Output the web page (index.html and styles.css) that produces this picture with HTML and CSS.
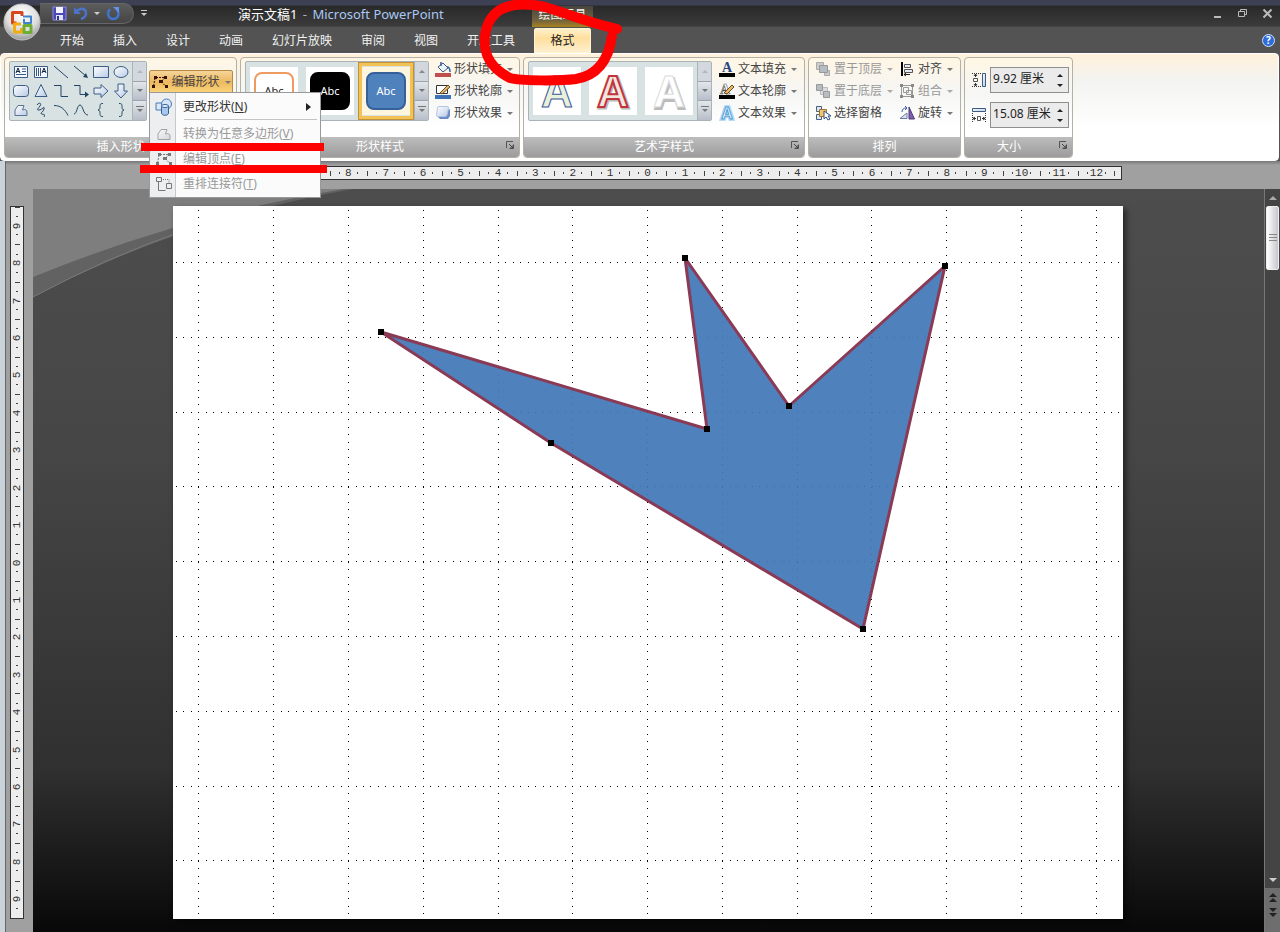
FILE: index.html
```html
<!DOCTYPE html>
<html lang="zh-CN">
<head>
<meta charset="utf-8">
<meta name="viewport" content="width=device-width, initial-scale=1">
<title>演示文稿1 - Microsoft PowerPoint</title>
<link rel="stylesheet" href="styles.css">
</head>
<body>
<svg class="defs" aria-hidden="true">
  <defs>
    <linearGradient id="lg" x1="0" y1="0" x2="1" y2="1"><stop offset="0" stop-color="#fff"/><stop offset="1" stop-color="#b9cbe6"/></linearGradient>
    <symbol id="launch" viewBox="0 0 9 9"><path d="M.5 7V.5H7M3.500 7.500h4v-4" fill="none" stroke="#555"/><path d="M3 3l4 4M7 4v3H4" stroke="#444" fill="none"/></symbol>
    <symbol id="points" viewBox="0 0 18 16"><path d="M5 3.500h9l-4 4 5 5M4 4L2.500 12.500" fill="none" stroke="currentColor" stroke-dasharray="2 1"/><path d="M3 2h3v3H3zM13 2h3v3h-3zM8 6h4v3H8zM14 11h3v3h-3zM1 11h3v3H1z" fill="currentColor"/></symbol>
    <symbol id="freeform" viewBox="0 0 16 16"><path d="M2 13.500V8l3-4.500h6L9.500 8c3-1 4.500 0 4.500 2v3.500z" fill="url(#lg)" stroke="#5b7590"/></symbol>
  </defs>
</svg>

<header class="top">
  <button class="orb" aria-label="Office 按钮">
    <svg viewBox="0 0 38 38" aria-hidden="true">
      <defs><radialGradient id="og" cx=".5" cy=".3" r=".75"><stop offset="0" stop-color="#fff"/><stop offset=".6" stop-color="#dcdcdc"/><stop offset="1" stop-color="#8b8b8b"/></radialGradient></defs>
      <circle cx="19" cy="19" r="18" fill="url(#og)" stroke="#c5c5c5"/>
      <g fill="none" stroke-linejoin="round">
        <path d="M19 13V9.500h-9.500V20h4" stroke="#d8471b" stroke-width="3"/><path d="M20 13.500h8v6.500h-7v-4" stroke="#3f83cc" stroke-width="2"/>
        <path d="M18 21h-6.500v8h7v-4" stroke="#f0ae13" stroke-width="3"/><path d="M21 22.500h7v7h-7z" stroke="#6fae35" stroke-width="3"/>
      </g>
    </svg>
  </button>
  <div class="titlebar">
    <div class="qat">
      <button aria-label="保存"><svg width="15" height="15" viewBox="0 0 15 15"><path d="M1 1h13v13H1z" fill="#4b49b5" stroke="#8d8ce6"/><path d="M4 1h7v6H4z" fill="#f2f4ff"/><path d="M4 9h7v5H4z" fill="#dfe4f5"/><path d="M5 10h2v4H5z" fill="#333a80"/></svg></button>
      <button aria-label="撤消"><svg width="15" height="15" viewBox="0 0 15 15"><path d="M4 5c4-4 9-2 9 2 0 3-2 5-5 6" fill="none" stroke="#4a74c8" stroke-width="2.500"/><path d="M1 1v7h7z" fill="#4a74c8"/></svg></button>
      <button class="mini" aria-label="撤消选项"><i class="caret light"></i></button>
      <button aria-label="重复"><svg width="15" height="15" viewBox="0 0 15 15"><path d="M4 3C0 8 3 13 7 13c5 0 7-5 4-9" fill="none" stroke="#3f74cf" stroke-width="2.500"/><path d="M7 1h6v6z" fill="#5e95e8"/></svg></button>
    </div>
    <button class="customize" aria-label="自定义快速访问工具栏"><i class="caret light"></i></button>
    <h1 class="title">演示文稿1 <span>- <b>Microsoft PowerPoint</b></span></h1>
    <div class="window-buttons">
      <button aria-label="最小化"><svg width="11" height="11" viewBox="0 0 11 11"><path d="M2 8h7v2H2z" fill="#bbb"/></svg></button>
      <button aria-label="向下还原"><svg width="11" height="11" viewBox="0 0 11 11"><path d="M3.500 3V1.500h6v5H8M1.500 3.500h6v5h-6z" fill="none" stroke="#bbb"/></svg></button>
      <button aria-label="关闭"><svg width="11" height="11" viewBox="0 0 11 11"><path d="M1.500 1.500l8 8M9.500 1.500l-8 8" stroke="#bbb" stroke-width="2"/></svg></button>
    </div>
  </div>
  <nav class="tabs">
    <button>开始</button><button>插入</button><button>设计</button><button>动画</button><button>幻灯片放映</button><button>审阅</button><button>视图</button><button>开发工具</button>
    <div class="context">
      <span class="context-label">绘图工具</span>
      <button class="active">格式</button>
      <svg class="red-ring" viewBox="0 0 160 92" aria-hidden="true"><path d="M143 29C117 23 97 15 71 7 42 1 22 6 14 24 6 46 12 66 36 78c10 3 50 3 66 1 24-4 33-22 36-43" fill="none" stroke="#f00" stroke-width="10" stroke-linecap="round" stroke-linejoin="round"/></svg>
    </div>
    <button class="help" aria-label="帮助">?</button>
  </nav>
</header>

<section class="ribbon" aria-label="格式">
  <div class="group">
    <div class="body">
      <div class="gallery">
        <div class="shapes">
          <button aria-label="文本框"><svg viewBox="0 0 16 16"><path d="M1.500 2.500h13v11h-13z" fill="#f4f8ff" stroke="#3d5c85"/><path d="M9 5h4M9 7.500h4M3 10.500h10" stroke="#3d5c85"/><path d="M3 9l2-5 2 5M4 7.500h2" fill="none" stroke="#123"/></svg></button>
          <button aria-label="竖排文本框"><svg viewBox="0 0 16 16"><path d="M1.500 2.500h13v11h-13z" fill="#f4f8ff" stroke="#3d5c85"/><path d="M3.500 4v8M5.500 4v8M7.500 4v8" stroke="#3d5c85"/><path d="M9 9l2-5 2 5M10 7.500h2" fill="none" stroke="#123"/></svg></button>
          <button aria-label="直线"><svg viewBox="0 0 16 16"><path d="M1 2l14 12" stroke="#234564"/></svg></button>
          <button aria-label="箭头"><svg viewBox="0 0 16 16"><path d="M1 2l12 10" stroke="#234564"/><path d="M15 14l-5-1 3-4z" fill="#234564"/></svg></button>
          <button aria-label="矩形"><svg viewBox="0 0 16 16"><path d="M.5 2.500h15v11H.5z" fill="url(#lg)" stroke="#3d5c85"/></svg></button>
          <button aria-label="椭圆"><svg viewBox="0 0 16 16"><ellipse cx="8" cy="8" rx="7" ry="5.500" fill="url(#lg)" stroke="#3d5c85"/></svg></button>
          <button aria-label="圆角矩形"><svg viewBox="0 0 16 16"><rect x=".5" y="2.500" width="15" height="11" rx="3" fill="url(#lg)" stroke="#3d5c85"/></svg></button>
          <button aria-label="三角形"><svg viewBox="0 0 16 16"><path d="M8 1.500l6 12H2z" fill="url(#lg)" stroke="#3d5c85"/></svg></button>
          <button aria-label="肘形连接符"><svg viewBox="0 0 16 16"><path d="M1 2.500h7v11h7" fill="none" stroke="#234564"/></svg></button>
          <button aria-label="肘形箭头"><svg viewBox="0 0 16 16"><path d="M1 2.500h6v9h6" fill="none" stroke="#234564"/><path d="M16 11.500l-4 3v-6z" fill="#234564"/></svg></button>
          <button aria-label="右箭头"><svg viewBox="0 0 16 16"><path d="M1 5h7V1.500L15 8l-7 6.500V11H1z" fill="url(#lg)" stroke="#3d5c85"/></svg></button>
          <button aria-label="下箭头"><svg viewBox="0 0 16 16"><path d="M5 1v7H1.500L8 15l6.500-7H11V1z" fill="url(#lg)" stroke="#3d5c85"/></svg></button>
          <button aria-label="任意多边形"><svg><use href="#freeform"/></svg></button>
          <button aria-label="自由曲线"><svg viewBox="0 0 16 16"><path d="M4 3c2-3 5-2 3 1s-4 4-1 4 6-5 5-1-5 4-2 5 3 0 2 3" fill="none" stroke="#234564"/></svg></button>
          <button aria-label="弧形"><svg viewBox="0 0 16 16"><path d="M1 3.500c7 0 11 4 14 10" fill="none" stroke="#234564"/></svg></button>
          <button aria-label="曲线"><svg viewBox="0 0 16 16"><path d="M1 12C4 12 4 3 7 3s3 10 8 10" fill="none" stroke="#234564"/></svg></button>
          <button aria-label="左大括号"><svg viewBox="0 0 16 16"><path d="M10 1.500c-3 0-3 1-3 3s0 3-2 3.500c2 .5 2 1.500 2 3.500s0 3 3 3" fill="none" stroke="#234564"/></svg></button>
          <button aria-label="右大括号"><svg viewBox="0 0 16 16"><path d="M6 1.500c3 0 3 1 3 3s0 3 2 3.500c-2 .5-2 1.500-2 3.500s0 3-3 3" fill="none" stroke="#234564"/></svg></button>
        </div>
        <div class="scroller"><button disabled aria-label="上一行"><i class="up"></i></button><button aria-label="下一行"><i class="caret"></i></button><button aria-label="其他"><i class="caret more"></i></button></div>
      </div>
      <div class="edit">
        <button class="edit-button" aria-expanded="true"><svg width="18" height="16"><use href="#points"/></svg><span>编辑形状</span><i class="caret"></i></button>
        <div class="menu" role="menu">
          <button role="menuitem"><svg width="18" height="18" viewBox="0 0 18 18"><path d="M1 5h9v7H1z" fill="#dbe7f7" stroke="#4a7ab5"/><circle cx="11.500" cy="6" r="5" fill="#d4e4f8" stroke="#4a7ab5"/><path d="M6.500 8v7c0 3 7 3 7 0V8z" fill="#a9c7ec" stroke="#336199"/><ellipse cx="10" cy="8" rx="3.500" ry="1.500" fill="#eef5ff" stroke="#336199"/></svg><span>更改形状(<u>N</u>)</span><i class="sub"></i></button>
          <hr>
          <button role="menuitem" disabled><svg class="grey" width="16" height="16"><use href="#freeform"/></svg><span>转换为任意多边形(<u>V</u>)</span></button>
          <button role="menuitem" disabled><svg width="18" height="16"><use href="#points"/></svg><span>编辑顶点(<u>E</u>)</span></button>
          <button role="menuitem" disabled><svg width="18" height="16" viewBox="0 0 18 16"><path d="M1.500 1.500h5v4h-5zM11.500 7.500h5v5h-5zM3.500 6v8.500h7" fill="none" stroke="#777"/><path d="M8 3.500h6V7" fill="none" stroke="#777" stroke-dasharray="1 1"/></svg><span>重排连接符(<u>T</u>)</span></button>
          <div class="red-line first"></div>
          <div class="red-line second"></div>
        </div>
      </div>
    </div>
    <h2>插入形状</h2>
  </div>

  <div class="group">
    <div class="body wide">
      <div class="gallery">
        <div class="tiles">
          <button><span class="abc outline">Abc</span></button>
          <button><span class="abc black">Abc</span></button>
          <button class="selected"><span class="abc blue">Abc</span></button>
        </div>
        <div class="scroller"><button aria-label="上一行"><i class="up"></i></button><button aria-label="下一行"><i class="caret"></i></button><button aria-label="其他"><i class="caret more"></i></button></div>
      </div>
      <div class="commands">
        <button><svg width="16" height="16" viewBox="0 0 16 16"><path d="M3 6l5-4 5 5-5 4z" fill="#eef3fb" stroke="#445a7a"/><path d="M6 5V1M12 6c3 0 3 3 3 5" fill="none" stroke="#2f62a8" stroke-width="1.500"/><path d="M0 12h16v4H0z" fill="#c0504d"/></svg>形状填充<i class="caret"></i></button>
        <button><svg width="16" height="16" viewBox="0 0 16 16"><path d="M1.500 2.500h11v8h-11z" fill="#fff" stroke="#333"/><path d="M5 10l8-8 2 2-8 7z" fill="#e5b867" stroke="#6b4b22"/><path d="M0 12h16v4H0z" fill="#3f72b5"/></svg>形状轮廓<i class="caret"></i></button>
        <button><svg width="16" height="16" viewBox="0 0 16 16"><path d="M2 11l3 3h8l2-3V4z" fill="#6d8cc4"/><path d="M4 1.500h8q2 0 1.500 2L12 10q-.5 1.500-2 1.500H3q-2 0-1.500-2L2.500 3Q3 1.500 4 1.500z" fill="url(#lg)" stroke="#b2c4e4"/></svg>形状效果<i class="caret"></i></button>
      </div>
    </div>
    <h2>形状样式</h2>
    <button class="launcher" aria-label="设置形状格式"><svg width="9" height="9"><use href="#launch"/></svg></button>
  </div>

  <div class="group">
    <div class="body art-body">
      <div class="gallery">
        <div class="tiles art">
          <button aria-label="艺术字样式 1"><svg viewBox="0 0 48 48"><text x="24" y="40" fill="#e9f0dc" stroke="#3a5998">A</text></svg></button>
          <button aria-label="艺术字样式 2"><svg viewBox="0 0 48 48"><text x="25" y="41" fill="#aaa" stroke="#bbb" stroke-width="3">A</text><text x="24" y="40" fill="#f2e6e0" stroke="#c2343b" stroke-width="2">A</text></svg></button>
          <button aria-label="艺术字样式 3"><svg viewBox="0 0 48 48"><text x="25" y="42" fill="#999" stroke="#bbb" stroke-width="2">A</text><text x="24" y="40" fill="#fff" stroke="#ddd">A</text></svg></button>
        </div>
        <div class="scroller"><button disabled aria-label="上一行"><i class="up"></i></button><button aria-label="下一行"><i class="caret"></i></button><button aria-label="其他"><i class="caret more"></i></button></div>
      </div>
      <div class="commands">
        <button><svg class="serif" width="16" height="16" viewBox="0 0 16 16"><text x="8" y="11" fill="#27457f">A</text><path d="M0 12h16v4H0z"/></svg>文本填充<i class="caret"></i></button>
        <button><svg class="serif" width="16" height="16" viewBox="0 0 16 16"><text x="6" y="11" fill="#fff" stroke="#555" stroke-width=".6">A</text><path d="M5 10l8-8 2 2-7 7z" fill="#e5b867" stroke="#6b4b22"/><path d="M0 12h16v4H0z"/></svg>文本轮廓<i class="caret"></i></button>
        <button><svg class="glow" width="16" height="16" viewBox="0 0 16 16"><text x="8" y="14" fill="#e5f4ff" stroke="#b5dcf7" stroke-width="4">A</text><text x="8" y="14" fill="#fff" stroke="#4c9bd8">A</text></svg>文本效果<i class="caret"></i></button>
      </div>
    </div>
    <h2>艺术字样式</h2>
    <button class="launcher" aria-label="设置文本效果格式"><svg width="9" height="9"><use href="#launch"/></svg></button>
  </div>

  <div class="group">
    <div class="body arrange">
      <div class="commands">
        <button disabled><svg width="16" height="16" viewBox="0 0 16 16"><path d="M1.500 1.500h7v7h-7zM9.500 9.500h5v5h-5z" fill="#ccc" stroke="#aaa"/><path d="M4.500 4.500h8v7h-8z" fill="#b7bcc3" stroke="#999"/></svg>置于顶层<i class="caret"></i></button>
        <button disabled><svg width="16" height="16" viewBox="0 0 16 16"><path d="M5.500 4.500h7v7h-7z" fill="#ddd" stroke="#bbb"/><path d="M1.500 1.500h6v6h-6zM8.500 8.500h6v6h-6z" fill="#b7bcc3" stroke="#999"/></svg>置于底层<i class="caret"></i></button>
        <button><svg width="16" height="16" viewBox="0 0 16 16"><path d="M1.500 1.500h5v5h-5zM1.500 9.500h5v5h-5z" fill="#dce6f4" stroke="#4c5f7d"/><path d="M4.500 4.500h7v7h-7z" fill="#f5c46b" stroke="#9b7430"/><path d="M9 6v8l2-2 2 3 2-1-2-3h3z" fill="#fff" stroke="#2e4f87"/></svg>选择窗格</button>
      </div>
      <div class="commands">
        <button><svg width="16" height="16" viewBox="0 0 16 16"><path d="M2 1h2v14H2z"/><path d="M5.500 3.500h6v3h-6zM5.500 8.500h8v3h-8z" fill="#e5ebf5" stroke="#555"/><path d="M5 13.500h6M7 12l-2 1.500L7 15" fill="none" stroke="#222"/></svg>对齐<i class="caret"></i></button>
        <button disabled><svg width="16" height="16" viewBox="0 0 16 16"><path d="M2.500 2.500h11v11h-11zM4.500 4.500h5v5h-5zM7.500 7.500h5v4h-5z" fill="none" stroke="#999"/><path d="M1 1h3v3H1zM12 1h3v3h-3zM1 12h3v3H1zM12 12h3v3h-3z" fill="#888"/></svg>组合<i class="caret"></i></button>
        <button><svg width="16" height="16" viewBox="0 0 16 16"><path d="M1 13.500h7V8z" fill="#dbe3f2" stroke="#6c7c9c"/><path d="M10 14V2l5.500 12z" fill="#7d5fae" stroke="#4c397c"/><path d="M3 7c0-3 2-4 4-4M6 1l2 2-2 2" fill="none" stroke="#2f5f9f"/></svg>旋转<i class="caret"></i></button>
      </div>
    </div>
    <h2>排列</h2>
  </div>

  <div class="group">
    <div class="body size">
      <div class="field">
        <label for="h" aria-label="形状高度"><svg width="16" height="16" viewBox="0 0 16 16"><path d="M11.500 1.500h3v13h-3z" fill="url(#lg)" stroke="#3d5c85"/><path d="M1 1.500h9M1 14.500h9" stroke="#333" stroke-dasharray="1 1"/><path d="M2.500 6.500h4v3h-4z" fill="#fff" stroke="#555"/><path d="M4.500 2v3M3 4l1.500-2L6 4M4.500 11v3M3 12l1.500 2L6 12" fill="none" stroke="#333"/></svg></label>
        <span class="spin"><input id="h" value="9.92 厘米"><span><button aria-label="增加高度"><i class="up dark"></i></button><button aria-label="减少高度"><i class="caret dark"></i></button></span></span>
      </div>
      <div class="field">
        <label for="w" aria-label="形状宽度"><svg width="16" height="16" viewBox="0 0 16 16"><path d="M1.500 1.500h13v3h-13z" fill="url(#lg)" stroke="#3d5c85"/><path d="M1.500 6v9M14.500 6v9" stroke="#333" stroke-dasharray="1 1"/><path d="M6.500 9.500h3v4h-3z" fill="#fff" stroke="#555"/><path d="M2 11.500h3M4 10l-2 1.500L4 13M11 11.500h3M12 10l2 1.500-2 1.500" fill="none" stroke="#333"/></svg></label>
        <span class="spin"><input id="w" value="15.08 厘米"><span><button aria-label="增加宽度"><i class="up dark"></i></button><button aria-label="减少宽度"><i class="caret dark"></i></button></span></span>
      </div>
    </div>
    <h2 class="size-title">大小</h2>
    <button class="launcher" aria-label="大小和位置"><svg width="9" height="9"><use href="#launch"/></svg></button>
  </div>
</section>

<main class="workspace">
  <div class="ruler-top"><div class="ruler across"><span>12</span><span>11</span><span>10</span><span>9</span><span>8</span><span>7</span><span>6</span><span>5</span><span>4</span><span>3</span><span>2</span><span>1</span><span>0</span><span>1</span><span>2</span><span>3</span><span>4</span><span>5</span><span>6</span><span>7</span><span>8</span><span>9</span><span>10</span><span>11</span><span>12</span></div></div>
  <div class="ruler-side"><div class="ruler down"><span><b>9</b></span><span><b>8</b></span><span><b>7</b></span><span><b>6</b></span><span><b>5</b></span><span><b>4</b></span><span><b>3</b></span><span><b>2</b></span><span><b>1</b></span><span><b>0</b></span><span><b>1</b></span><span><b>2</b></span><span><b>3</b></span><span><b>4</b></span><span><b>5</b></span><span><b>6</b></span><span><b>7</b></span><span><b>8</b></span><span><b>9</b></span></div></div>
  <div class="canvas">
    <svg class="swoosh" viewBox="0 0 320 110" aria-hidden="true"><path d="M0 0h320Q150 30 0 108z" fill="#626262"/><path d="M0 108Q75 68 150 42" fill="none" stroke="#7a7a7a"/><path d="M0 0h310Q150 27 0 88z" fill="#7e7e7e"/></svg>
    <svg class="slide" viewBox="0 0 950 713" role="img" aria-label="幻灯片">
      <path d="M0 0h950v713H0z" fill="#fff"/>
      <path id="grid-v" class="dots" d="M25.500 4v709M100.500 4v709M175.500 4v709M250.500 4v709M325.500 4v709M399.500 4v709M474.500 4v709M549.500 4v709M624.500 4v709M698.500 4v709M773.500 4v709M848.500 4v709M923.500 4v709"/>
      <path id="grid-h" class="dots" d="M3 56.500h947M3 131.500h947M3 206.500h947M3 280.500h947M3 355.500h947M3 430.500h947M3 505.500h947M3 580.500h947M3 654.500h947"/>
      <path d="M208 126l326 97L512 52l104 148L772 60l-82 363-312-186z" fill="#4f81bd" stroke="#8b3a55" stroke-width="3" stroke-linejoin="round"/>
      <g opacity=".15"><use href="#grid-v"/><use href="#grid-h"/></g>
      <path d="M205 123h6v6h-6zM531 220h6v6h-6zM509 49h6v6h-6zM613 197h6v6h-6zM769 57h6v6h-6zM687 420h6v6h-6zM375 234h6v6h-6z"/>
    </svg>
  </div>
  <div class="scrollbar">
    <button aria-label="向上滚动"><i class="up light"></i></button>
    <div class="track"><div class="thumb"></div></div>
    <button aria-label="向下滚动"><i class="caret light"></i></button>
    <div class="pager">
      <button aria-label="上一张幻灯片"><i class="up dark"></i><i class="up dark"></i></button>
      <button aria-label="下一张幻灯片"><i class="caret dark"></i><i class="caret dark"></i></button>
    </div>
  </div>
</main>
</body>
</html>
```
FILE: styles.css
```css
* { box-sizing: border-box; }
body {
  margin: 0; min-height: 100vh; display: flex; flex-direction: column; background: #535353;
  font: 12px/16px "Noto Sans", "Noto Sans CJK SC", sans-serif; color: #444;
}
button { border: 0; padding: 0; background: none; font: inherit; color: inherit; display: flex; align-items: center; justify-content: center; }
svg { display: block; flex: none; }
.defs { position: absolute; width: 0; height: 0; }
h1, h2 { margin: 0; font-weight: 400; }

.caret, .up { display: block; flex: none; width: 0; height: 0; border: 3px solid transparent; }
.caret { border-top: 3px solid #777; border-bottom: 0; }
.up { border-bottom: 3px solid #888; border-top: 0; }
.caret.light { border-top-color: #ccc; }
.up.light { border-bottom-color: #aaa; }
.caret.dark { border-top-color: #222; }
.up.dark { border-bottom-color: #222; }
.caret.more, .customize .caret { position: relative; }
.caret.more::before, .customize .caret::before { content: ""; position: absolute; left: -4px; top: -6px; width: 8px; height: 1px; background: #777; }
.customize .caret::before { left: -3px; width: 6px; background: #ccc; }

/* Title bar and tabs */
.top { position: relative; }
.orb { position: absolute; left: 3px; top: 3px; z-index: 3; }
.orb svg { width: 38px; height: 38px; }
.titlebar {
  display: flex; align-items: flex-start; height: 27px; padding: 3px 7px 0 40px;
  background: linear-gradient(#3e4053 0 5px, #292929 6px, #3b3b3b 26px, #4b4b4b);
}
.qat { display: flex; align-items: center; gap: 6px; height: 21px; padding: 0 12px; border-radius: 0 11px 11px 0; background: linear-gradient(#5c5c5c, #454545); border: 1px solid #666; border-left: 0; }
.qat .mini { width: 6px; }
.customize { width: 20px; height: 22px; }
.title { flex: 1; margin-left: 84px; font-size: 13px; line-height: 22px; color: #fff; white-space: nowrap; }
.title span { color: #a8b4cc; margin-left: 2px; }
.title b { font-weight: 400; color: #a9c8f5; margin-left: 2px; }
.window-buttons { display: flex; gap: 14px; padding-top: 5px; }
.tabs { display: flex; align-items: stretch; gap: 5px; height: 26px; padding: 0 5px 0 48px; color: #f2f2f2; background: #535353; }
.tabs > button { padding: 2px 12px 0; white-space: nowrap; }
.context { position: relative; width: 61px; display: flex; }
.context-label {
  position: absolute; left: 0; right: 0; bottom: 100%; height: 21px; line-height: 17px; text-align: center; white-space: nowrap;
  background: linear-gradient(#47443f, #75643c 70%, #a8821e); color: #f2f2f2;
}
.active { flex: 1; margin: 1px 2px 0; border-radius: 3px 3px 0 0; background: linear-gradient(#fff3d2, #ffdf9c 40%, #fdf0d2); color: #222; box-shadow: inset 0 0 0 1px #fff2cf; }
.red-ring { position: absolute; left: -58px; top: -27px; width: 160px; height: 92px; z-index: 6; pointer-events: none; }
.tabs .help { width: 13px; height: 13px; margin: auto 0 auto auto; padding: 0; border-radius: 50%; background: #2e6cdc; border: 1px solid #cfe0ff; color: #fff; font-size: 10px; font-weight: 700; line-height: 10px; }

/* Ribbon */
.ribbon {
  display: flex; gap: 3px; min-height: 108px; padding: 3px 3px 2px; margin: 0 1px 0 0;
  border: 1px solid #fff; border-radius: 4px; background: linear-gradient(#fff1da, #f3f3f1 25%, #fff 70%);
}
.group { position: relative; display: flex; flex-direction: column; border: 1px solid #b5b0a6; border-radius: 4px; background: linear-gradient(#fff6e4, #f6f6f5 35%, #fff 70%); }
.body { flex: 1; display: flex; align-items: flex-start; gap: 2px; padding: 3px 3px 0 4px; }
.body.wide { gap: 6px; padding-right: 3px; }
.body.art-body { gap: 7px; padding-right: 4px; }
.group h2 { height: 20px; font-size: 12px; line-height: 20px; text-align: center; color: #fff; background: linear-gradient(#bdbdbd, #9c9c9c); border-radius: 0 0 3px 3px; }
.launcher { position: absolute; right: 4px; bottom: 7px; }
.gallery { display: flex; height: 60px; border: 1px solid #a9b3b8; background: #d8e2e3; border-radius: 2px; }
.shapes { display: grid; grid-template-columns: repeat(6, 20px); padding: 0 1px; align-content: space-around; }
.shapes svg { width: 16px; height: 16px; }
.scroller { width: 14px; display: grid; border-left: 1px solid #a9b3b8; background: #d3d7de; }
.scroller button + button { border-top: 1px solid #9ca5ad; background: linear-gradient(#e3e6ea, #b8bec9); }
.scroller button:disabled .up { border-bottom-color: #b3b8bf; }
.tiles { display: flex; }
.tiles button { width: 56px; padding: 4px; }
.tiles .abc, .tiles svg { width: 48px; height: 48px; background: #fff; }
.abc { display: grid; place-items: center; position: relative; z-index: 0; color: #222; font-size: 11px; }
.abc::before { content: ""; position: absolute; z-index: -1; inset: 5px 4px; border-radius: 8px; background: #fff; border: 2px solid #ee9b62; }
.abc.black, .abc.blue { color: #fff; }
.abc.black::before { background: #000; border-color: #000; }
.abc.blue::before { background: #4f81bd; border-color: #36609a; }
.tiles .selected { padding: 0; border: 4px solid #f3c257; outline: 1px solid #c29336; outline-offset: -1px; }
.tiles .selected .abc { background: #fdf5dd; }
.art svg { overflow: visible; }
.art text { font: 700 44px "Liberation Sans", sans-serif; text-anchor: middle; }
.serif text { font: 700 14px "Liberation Serif", serif; text-anchor: middle; }
.glow text { font: 700 16px "Liberation Sans", sans-serif; text-anchor: middle; }
.commands { display: flex; flex-direction: column; margin-top: -3px; }
.commands button { height: 22px; gap: 3px; justify-content: flex-start; white-space: nowrap; padding-right: 3px; }
.commands .caret { margin-left: 2px; }
.commands button:disabled { color: #999; }
.commands button:disabled .caret { border-top-color: #aaa; }
.arrange { gap: 3px; padding: 3px 4px 0 6px; }

.edit { position: relative; margin-top: 9px; }
.edit-button { width: 84px; height: 24px; gap: 2px; border: 1px solid #b68a42; border-radius: 2px; background: linear-gradient(#f5d59b, #eeb85e 50%, #fbd67c); color: #444; white-space: nowrap; }
.edit-button svg { color: #311; }
.edit-button .caret { margin-left: 3px; }
.menu {
  position: absolute; z-index: 4; left: 0; top: 22px; width: 172px; padding: 1px; border: 1px solid #999; font-size: 12px;
  background: linear-gradient(90deg, #eceef0 25px, #c8c8c8 25px 26px, #fbfbfb 26px);
}
.menu > button { display: grid; grid-template-columns: 26px 1fr auto; column-gap: 6px; justify-items: start; width: 100%; height: 25px; white-space: nowrap; color: #333; }
.menu > button svg { justify-self: center; }
.menu > button:disabled { color: #999; }
.menu > button:disabled svg { color: #777; }
.menu .grey { filter: grayscale(1); opacity: .6; }
.menu hr { margin: 0 2px 1px 33px; border: 0; border-top: 1px solid #c4c4c4; }
.sub { border: 4px solid transparent; border-left: 5px solid #222; border-right: 0; margin-right: 8px; }
.red-line { position: absolute; height: 8px; background: #f00; }
.red-line.first { left: -9px; right: -4px; top: 50px; }
.red-line.second { left: -10px; right: -7px; top: 72px; }

.size { flex-direction: column; gap: 9px; padding: 9px 3px 0 6px; }
.size-title { padding-right: 19px; }
.field { display: flex; align-items: center; gap: 3px; }
.spin { display: flex; width: 79px; height: 26px; border: 1px solid #8f8f8f; background: #ebebeb; }
.spin input { flex: 1; min-width: 0; border: 0; padding: 0 0 2px 2px; background: none; font: inherit; color: #222; }
.spin > span { display: grid; width: 16px; padding: 2px 0; }

/* Slide area */
.workspace {
  flex: 1; display: grid; grid-template-columns: 33px minmax(0, 1fr) 16px; grid-template-rows: 28px 1fr;
  background: linear-gradient(90deg, #cbd3da 0 5px, #666 5px 6px, transparent 6px), linear-gradient(#777, #a0a0a0 4px);
}
.ruler-top { grid-column: 2; padding: 5px 142px 0 140px; }
.ruler { display: flex; background: #ededed; border: 1px solid #333; font: 11px/12px "Liberation Mono", monospace; color: #333; }
.ruler span { flex: 1; display: grid; place-items: center; background-repeat: no-repeat; }
.ruler b { font-weight: 400; transform: rotate(-90deg); }
.ruler.across { height: 14px; padding: 0 6px; }
.across span { background-image: linear-gradient(#444, #444), linear-gradient(#444, #444), linear-gradient(#444, #444); background-size: 1px 5px, 1px 2px, 1px 2px; background-position: 0 50%, 25% 50%, 75% 50%; }
.across span:last-child { background-image: linear-gradient(#444, #444), linear-gradient(#444, #444), linear-gradient(#444, #444), linear-gradient(#444, #444); background-size: 1px 5px, 1px 2px, 1px 2px, 1px 5px; background-position: 0 50%, 25% 50%, 75% 50%, 100% 50%; }
.ruler-side { grid-column: 1; grid-row: 2; padding: 17px 9px 13px 10px; display: flex; }
.ruler.down { flex: 1; flex-direction: column; }
.down span { background-image: linear-gradient(#444, #444), linear-gradient(#444, #444), linear-gradient(#444, #444); background-size: 5px 1px, 2px 1px, 2px 1px; background-position: 50% 0, 50% 25%, 50% 75%; }
.canvas { grid-column: 2; grid-row: 2; position: relative; padding: 17px 141px 13px 140px; background: linear-gradient(#4d4d4d, #464646 35%, #303030 78%, #080808); }
.swoosh { position: absolute; left: 0; top: 0; width: 320px; height: 110px; }
.slide { position: relative; width: 100%; height: auto; box-shadow: 3px 3px 6px #0008; }
.dots { fill: none; stroke: #000; stroke-dasharray: 1 6.48; shape-rendering: crispEdges; }
.scrollbar { grid-column: 3; grid-row: 2; display: flex; flex-direction: column; background: #444; border-left: 1px solid #777; }
.scrollbar > button { height: 17px; }
.scrollbar > button .up, .scrollbar > button .caret, .pager .up, .pager .caret { border-left-width: 4px; border-right-width: 4px; }
.scrollbar > button .up { border-bottom-width: 4px; }
.scrollbar > button .caret { border-top-width: 4px; }
.track { flex: 1; }
.thumb { height: 64px; margin: 0 1px; border: 1px solid #eee; border-radius: 2px; background: repeating-linear-gradient(#888 0 1px, transparent 1px 3px) center / 8px 8px no-repeat, linear-gradient(90deg, #fff, #c5c5cd); }
.pager { height: 44px; background: #6e6e6e; display: flex; flex-direction: column; gap: 6px; padding-top: 5px; }
.pager button { flex-direction: column; gap: 1px; }
.pager .up { border-bottom-width: 4px; }
.pager .caret { border-top-width: 4px; }
.pager i { border-top-color: #000; border-bottom-color: #000; }
```
